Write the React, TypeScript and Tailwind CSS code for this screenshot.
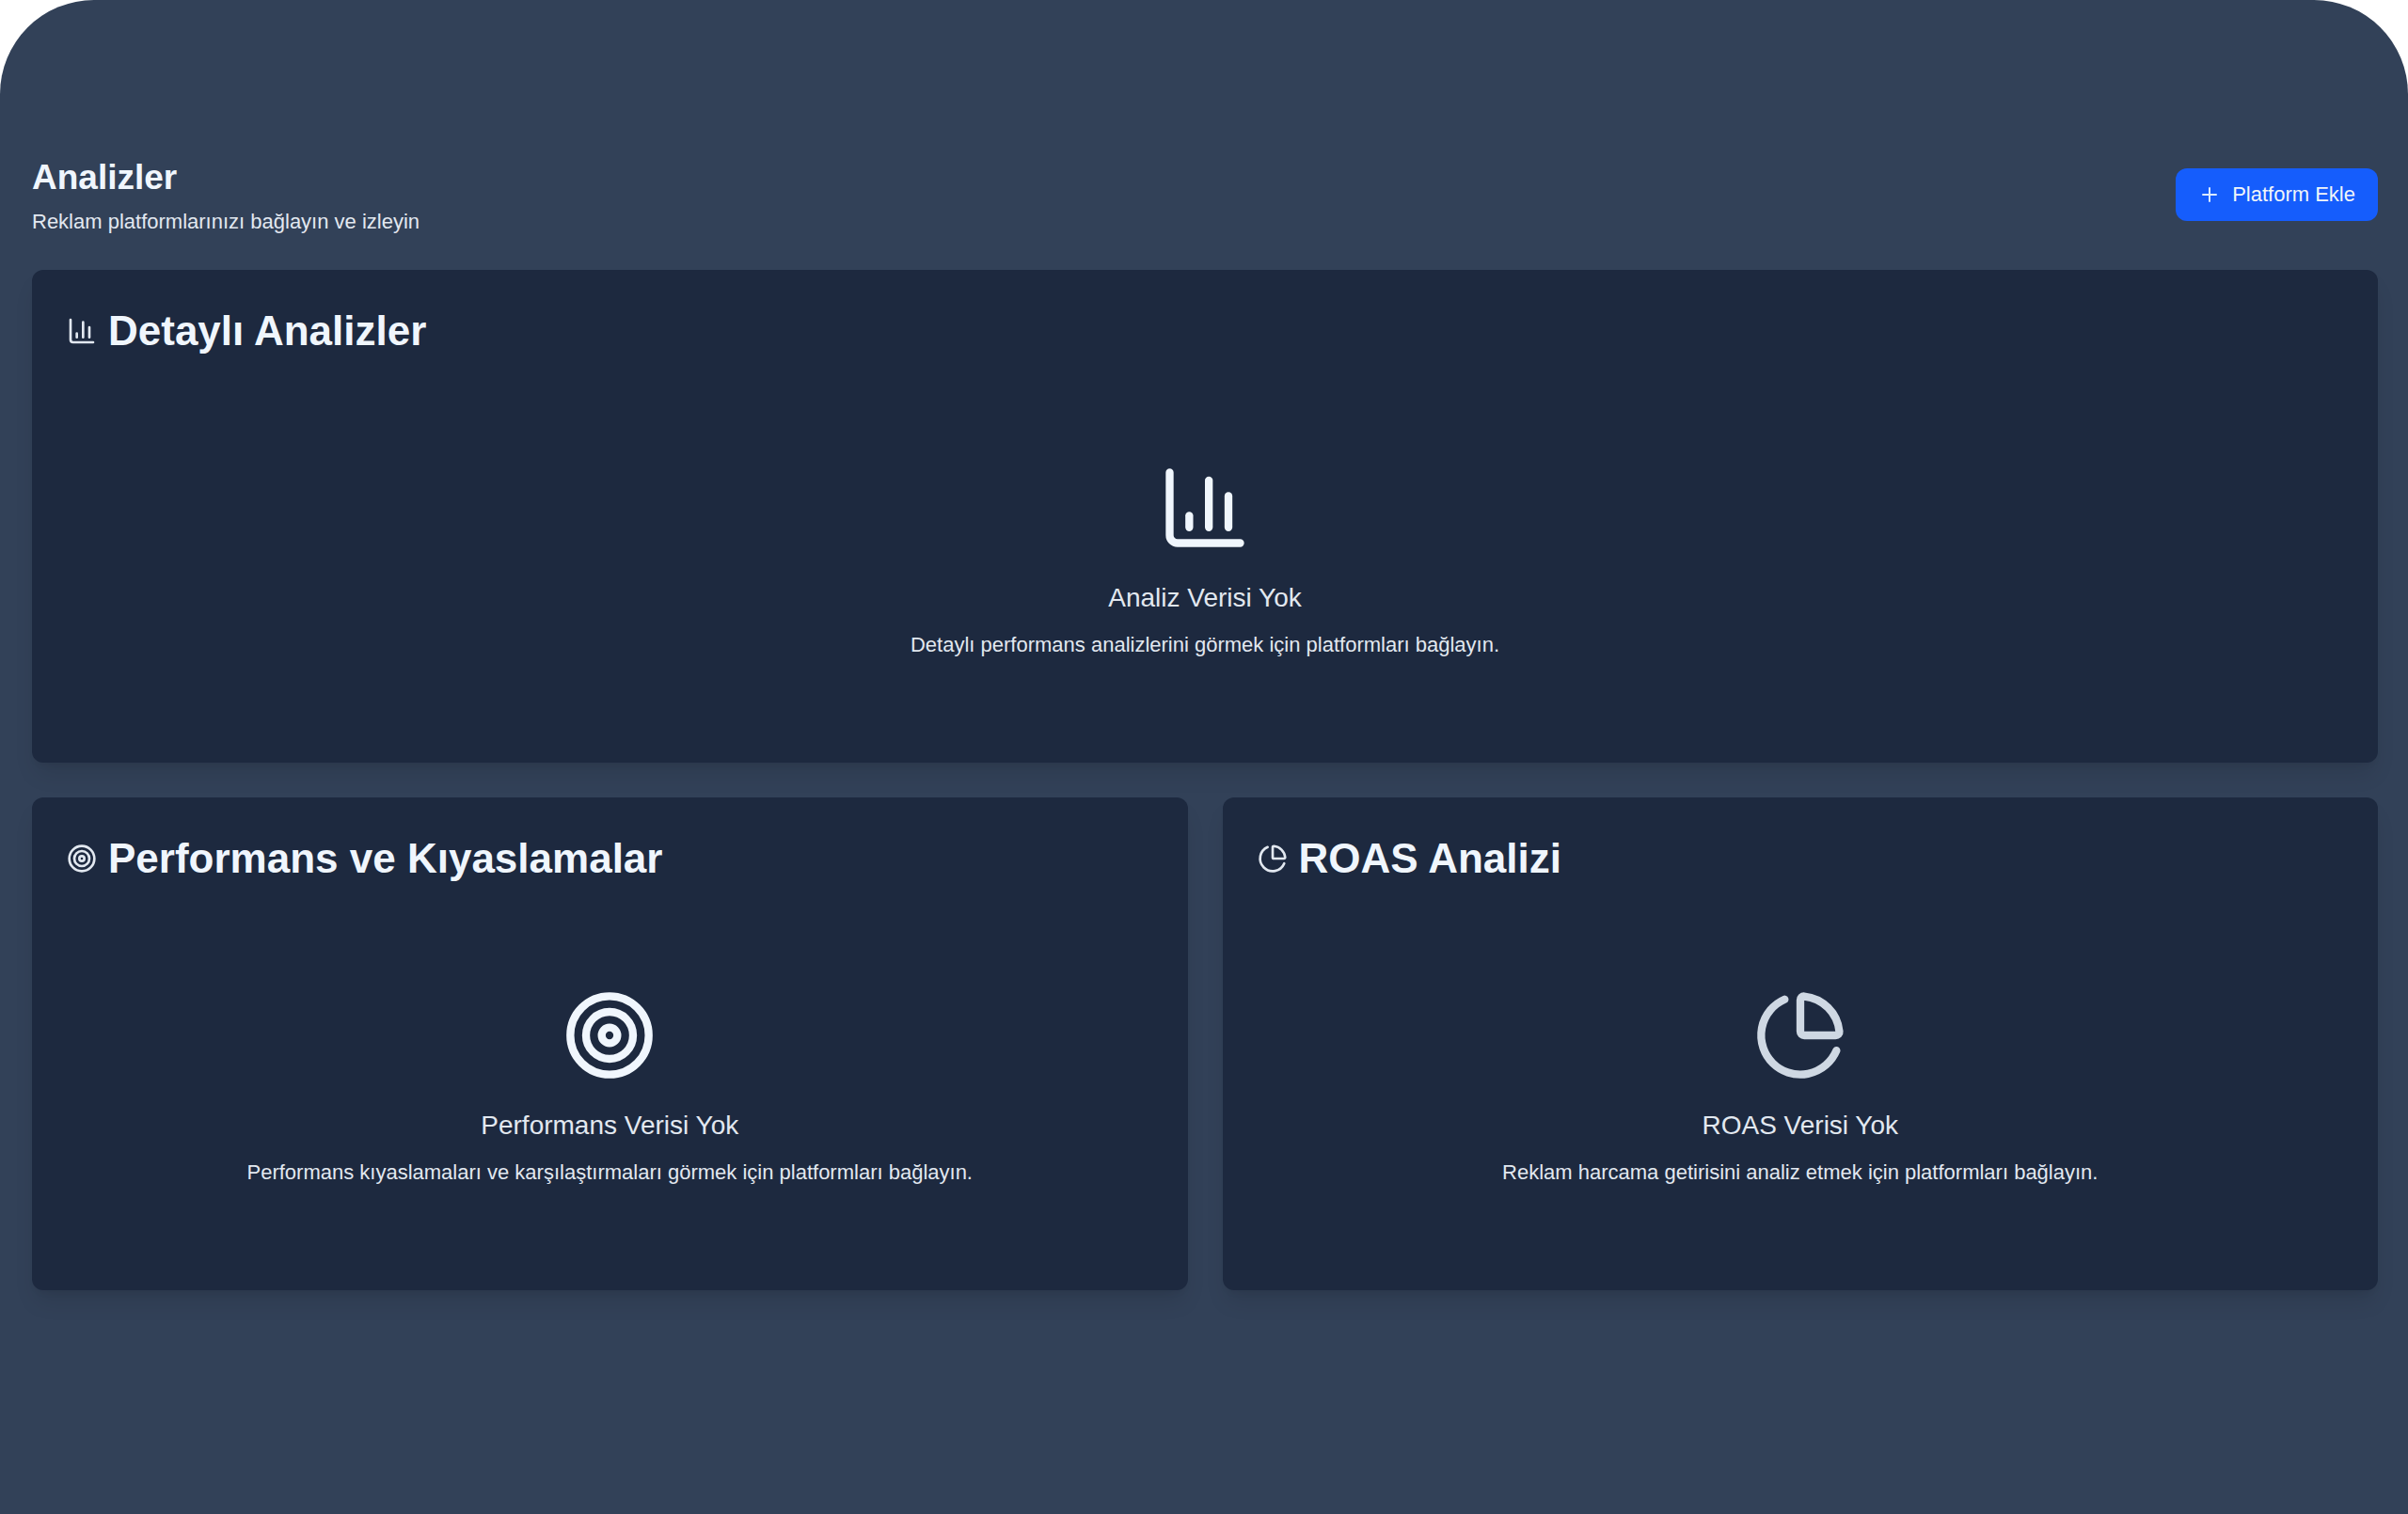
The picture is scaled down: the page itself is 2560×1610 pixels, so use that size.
import { ChartColumn, ChartPie, Plus, Target, type LucideIcon } from "lucide-react";

type PanelProps = {
    icon: LucideIcon;
    title: string;
    emptyTitle: string;
    emptyText: string;
    emptyIconColor?: string;
};

function Panel({ icon: Icon, title, emptyTitle, emptyText, emptyIconColor = "text-[#f0f6fd]" }: PanelProps) {
    return (
        <section className="bg-[#1d293f] rounded-xl shadow-[0_16px_24px_-5px_rgba(0,0,0,0.1),0_6px_10px_-6px_rgba(0,0,0,0.1)] p-[37px]">
            <h2 className="flex items-center gap-3 text-[44px] leading-[56px] font-bold text-[#f0f6fd]">
                <Icon className="size-8 shrink-0 text-slate-200" />
                {title}
            </h2>

            <div className="flex flex-col items-center text-center pt-[110px] pb-[72px]">
                <Icon className={`size-[100px] mb-6 ${emptyIconColor}`} />
                <h3 className="text-[28px] leading-[44px] text-slate-200 mb-3">{emptyTitle}</h3>
                <p className="text-[22px] leading-[32px] text-slate-200">{emptyText}</p>
            </div>
        </section>
    );
}

export default function App() {
    return (
        <div className="bg-white">
            <main
                className="min-h-screen bg-[#324158] rounded-t-[100px] pl-[34px] pr-8 pt-[162px] pb-16"
                style={{ fontFamily: '"Liberation Sans", Arial, sans-serif' }}
            >
                <header className="flex items-center justify-between mb-[35px]">
                    <div>
                        <h1 className="text-[37px] leading-[54px] font-bold text-[#f0f6fd] mb-1">Analizler</h1>
                        <p className="text-[22px] leading-[32px] text-slate-200">Reklam platformlarınızı bağlayın ve izleyin</p>
                    </div>
                    <button
                        type="button"
                        className="flex items-center gap-3 h-14 px-6 rounded-xl bg-[#155dfc] text-[22px] leading-[32px] text-slate-100"
                    >
                        <Plus className="size-6 text-blue-100" />
                        Platform Ekle
                    </button>
                </header>

                <div className="grid grid-cols-2 gap-[37px]">
                    <div className="col-span-2">
                        <Panel
                            icon={ChartColumn}
                            title="Detaylı Analizler"
                            emptyTitle="Analiz Verisi Yok"
                            emptyText="Detaylı performans analizlerini görmek için platformları bağlayın."
                        />
                    </div>
                    <Panel
                        icon={Target}
                        title="Performans ve Kıyaslamalar"
                        emptyTitle="Performans Verisi Yok"
                        emptyText="Performans kıyaslamaları ve karşılaştırmaları görmek için platformları bağlayın."
                    />
                    <Panel
                        icon={ChartPie}
                        title="ROAS Analizi"
                        emptyTitle="ROAS Verisi Yok"
                        emptyText="Reklam harcama getirisini analiz etmek için platformları bağlayın."
                        emptyIconColor="text-[#cfd8e3]"
                    />
                </div>
            </main>
        </div>
    );
}
